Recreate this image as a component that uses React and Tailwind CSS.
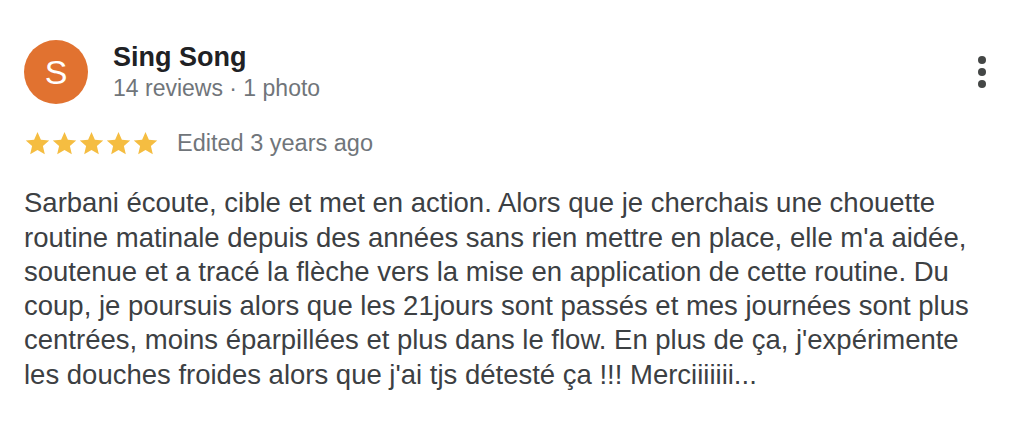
import React from 'react';

const Star = () => (
  <svg viewBox="0 0 24 24" className="w-[27px] h-[27px]">
    <path
      d="M12 1.8l3 6.8 7.4.7-5.6 4.9 1.7 7.3L12 17.7l-6.5 3.8 1.7-7.3-5.6-4.9 7.4-.7z"
      fill="#f5bd41"
    />
  </svg>
);

export default function App() {
  return (
    <div className="w-[1030px] h-[442px] bg-white font-['Liberation_Sans',Arial,sans-serif]">
      <div className="pl-6 pt-10">
        {/* Header */}
        <div className="flex items-start">
          <div className="w-16 h-16 rounded-full bg-[#e17230] flex items-center justify-center text-white text-[34px] leading-none">
            S
          </div>
          <div className="ml-[25px] flex-1">
            <div className="text-[27px] font-bold text-[#202124] leading-[34px]">Sing Song</div>
            <div className="text-[23px] text-[#70757a] leading-[28px]">14 reviews · 1 photo</div>
          </div>
          <div className="flex flex-col items-center gap-[4px] mt-[16px] mr-[44px]">
            <span className="w-[8px] h-[8px] rounded-full bg-[#444746]" />
            <span className="w-[8px] h-[8px] rounded-full bg-[#444746]" />
            <span className="w-[8px] h-[8px] rounded-full bg-[#444746]" />
          </div>
        </div>

        {/* Rating */}
        <div className="flex items-center mt-[22px]">
          <div className="flex">
            <Star />
            <Star />
            <Star />
            <Star />
            <Star />
          </div>
          <span className="ml-[18px] text-[23.5px] text-[#70757a]">Edited 3 years ago</span>
        </div>

        {/* Body */}
        <p className="mt-[25px] w-[990px] text-[27.5px] leading-[34.3px] text-[#3c4043]">
          Sarbani écoute, cible et met en action. Alors que je cherchais une chouette routine matinale depuis des
          années sans rien mettre en place, elle m'a aidée, soutenue et a tracé la flèche vers la mise en application
          de cette routine. Du coup, je poursuis alors que les 21jours sont passés et mes journées sont plus
          centrées, moins éparpillées et plus dans le flow. En plus de ça, j'expérimente
          <br />
          les douches froides alors que j'ai tjs détesté ça !!! Merciiiiiii...
        </p>
      </div>
    </div>
  );
}
